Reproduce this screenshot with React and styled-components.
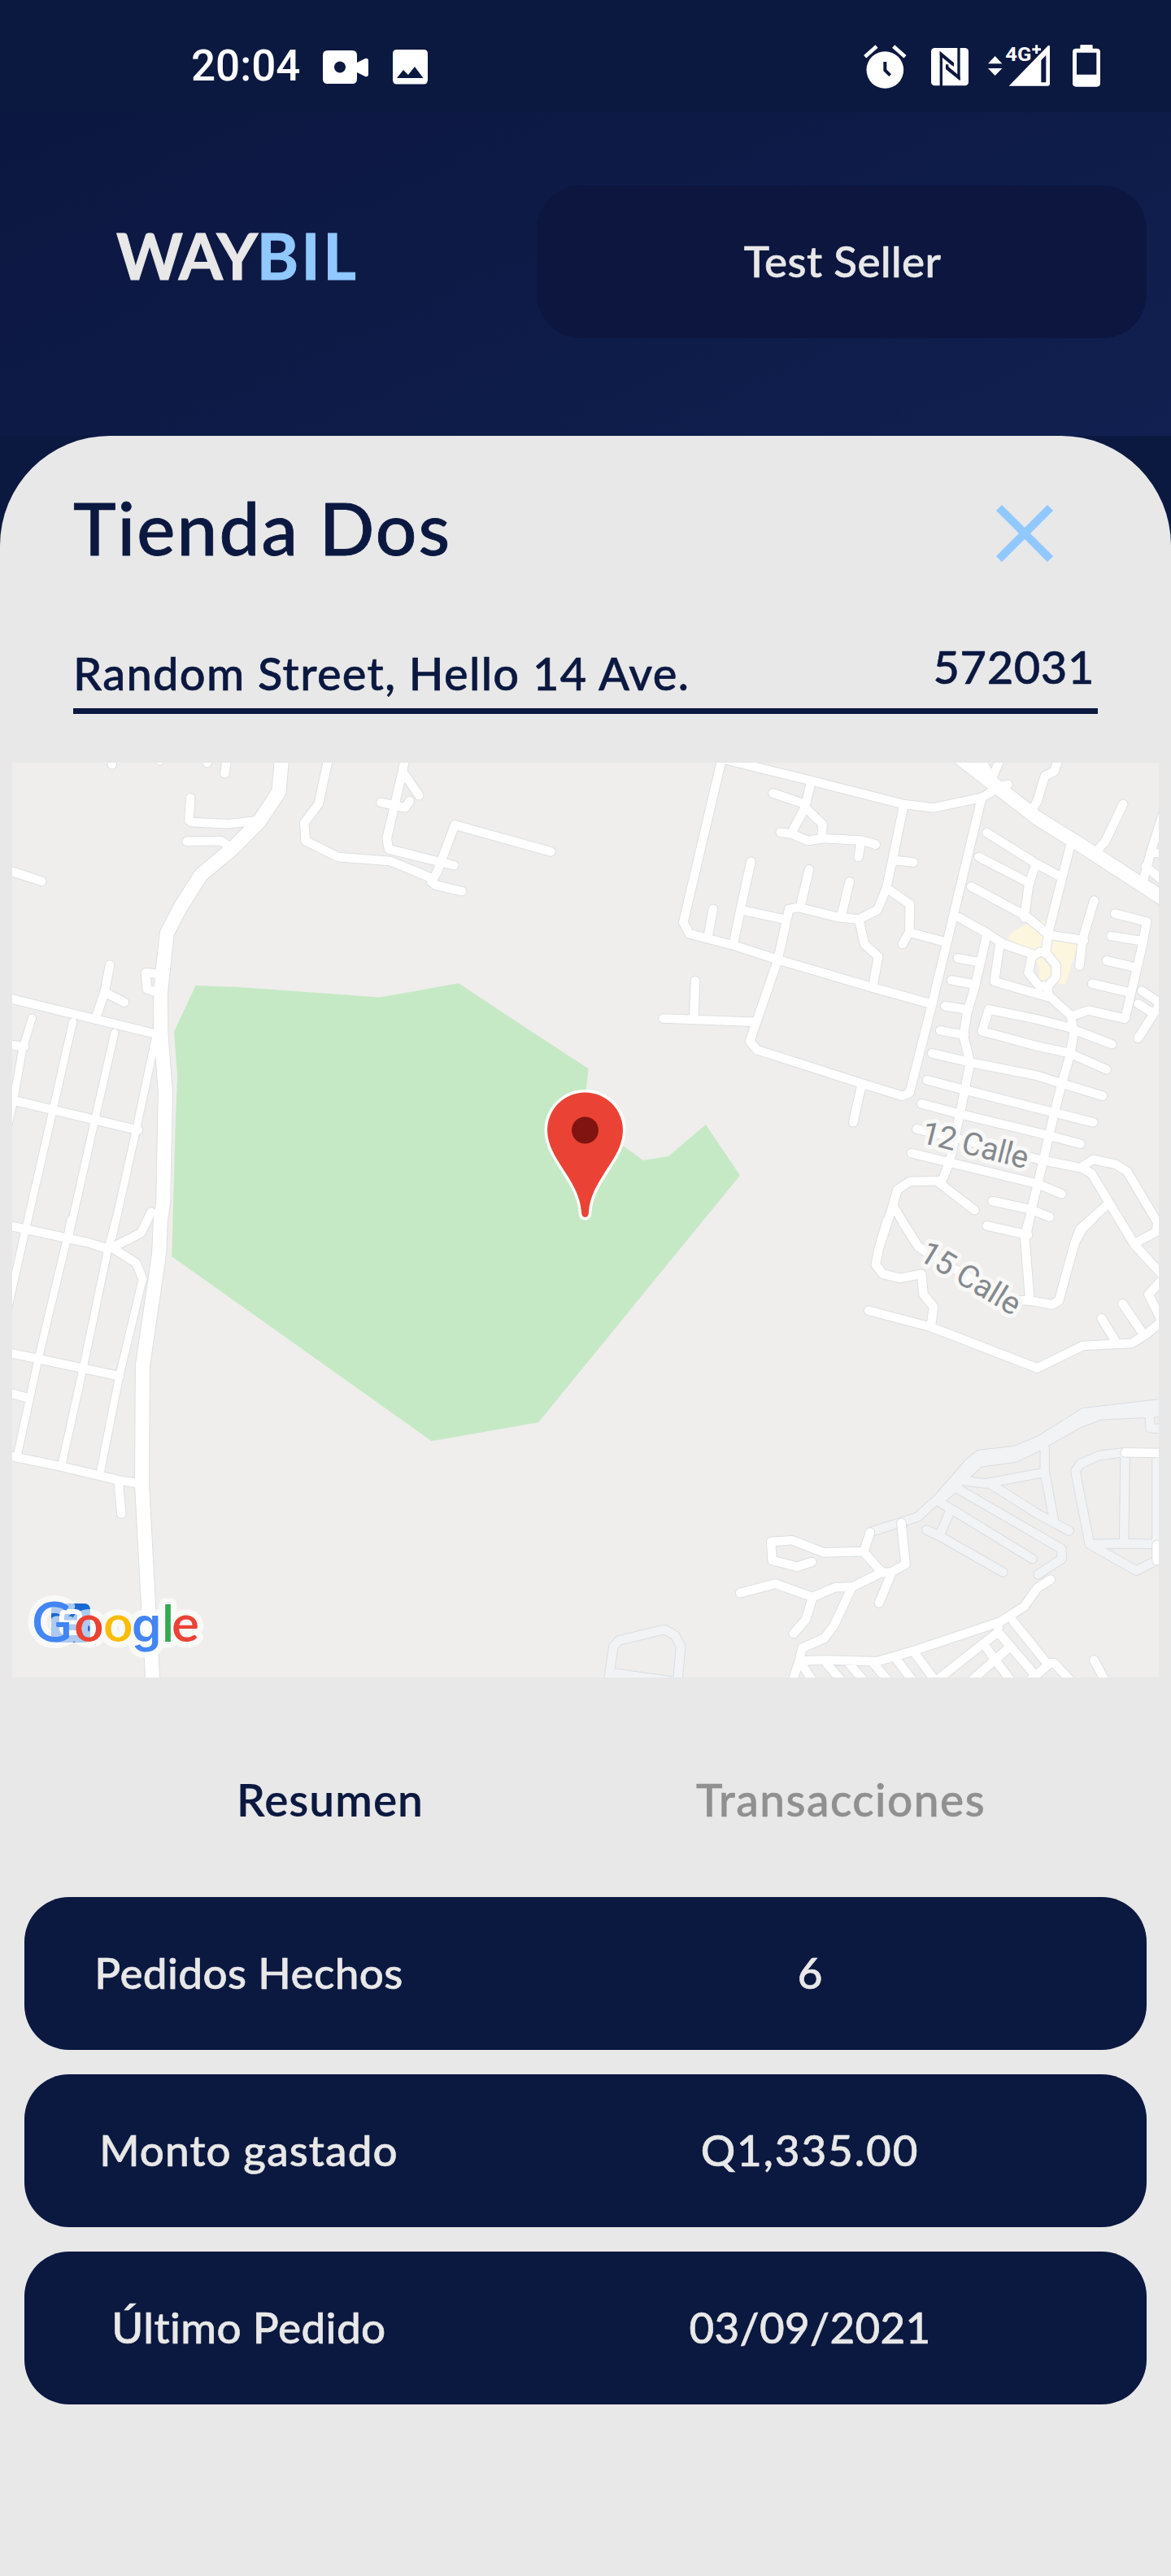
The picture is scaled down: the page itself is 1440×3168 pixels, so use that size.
import React from "react";
import styled, { createGlobalStyle } from "styled-components";

const navy = "#0b1840";
const light = "#e8e8e8";
const sky = "#90c8ff";

const GlobalStyle = createGlobalStyle`
  * { box-sizing: border-box; }
  body { margin: 0; background: ${navy}; font-family: Lato, "Open Sans", sans-serif; }
`;

const Screen = styled.main`
  width: 1440px;
  height: 3168px;
  display: flex;
  flex-direction: column;
  background: ${navy};
  overflow: hidden;
`;

const StatusBar = styled.div`
  height: 138px;
  flex: none;
  display: flex;
  align-items: flex-start;
  padding: 55px 87px 0 235px;
`;

const Clock = styled.span`
  width: 162px;
  font: 500 53px/52px Roboto, sans-serif;
  color: #fff;
`;

const StatusIcon = styled.svg`
  display: block;
  flex: none;
  width: ${(p) => p.$w}px;
  height: 54px;
  margin-left: ${(p) => p.$gap || 0};
  fill: #fff;
  overflow: visible;
`;

const Header = styled.header`
  height: 398px;
  flex: none;
  display: flex;
  justify-content: space-between;
  padding: 90px 30px 0 143px;
  background: linear-gradient(155deg, #0b1740 0%, #0e1b48 50%, #112050 100%);
`;

const Logo = styled.div`
  font-weight: 700;
  font-size: 78px;
  line-height: 173px;
  letter-spacing: -1.5px;
  color: ${light};
  -webkit-text-stroke: 1px currentColor;
  white-space: nowrap;
`;

const LogoAccent = styled.span`
  color: ${sky};
  letter-spacing: 3.5px;
`;

const SellerButton = styled.button`
  width: 750px;
  height: 188px;
  padding: 0 0 4px 2px;
  border: 0;
  border-radius: 55px;
  background: #0c163f;
  color: ${light};
  font: 500 53px/1 Lato, sans-serif;
  letter-spacing: 0.4px;
  -webkit-text-stroke: 0.6px currentColor;
`;

const Sheet = styled.section`
  flex: 1;
  background: ${light};
  border-radius: 135px 135px 0 0;
  color: ${navy};
`;

const TitleRow = styled.div`
  display: flex;
  justify-content: space-between;
  align-items: center;
  height: 170px;
  padding: 60px 145px 0 90px;
`;

const Title = styled.h1`
  margin: 0;
  padding-bottom: 4px;
  font-weight: 500;
  font-size: 89px;
  line-height: 106px;
  letter-spacing: 2.1px;
  -webkit-text-stroke: 0.8px currentColor;
`;

const CloseIcon = styled.svg`
  display: block;
  width: 70px;
  height: 70px;
  margin-top: 10px;
`;

const AddressRow = styled.div`
  display: flex;
  justify-content: space-between;
  align-items: flex-end;
  height: 172px;
  margin: 0 90px;
  border-bottom: 7px solid ${navy};
`;

const AddressText = styled.span`
  font-weight: 500;
  font-size: 56px;
  line-height: 64px;
  letter-spacing: ${(p) => p.$spacing}px;
  padding: 0 ${(p) => p.$right || 0}px ${(p) => p.$bottom}px 0;
  -webkit-text-stroke: 0.6px currentColor;
`;

const MapFrame = styled.svg`
  display: block;
  width: 1410px;
  height: 1125px;
  margin: 60px 15px 0;
  background: #efeeec;
`;

const Tabs = styled.nav`
  display: flex;
  height: 270px;
  padding: 110px 92px 0;
`;

const Tab = styled.div`
  flex: 1;
  height: 80px;
  text-align: center;
  font-weight: ${(p) => (p.$active ? 600 : 500)};
  font-size: 55px;
  line-height: 80px;
  letter-spacing: ${(p) => p.$spacing}px;
  color: ${(p) => (p.$active ? navy : "#909090")};
  -webkit-text-stroke: ${(p) => (p.$active ? 0.2 : 0.6)}px currentColor;
`;

const Summary = styled.div`
  display: flex;
  flex-direction: column;
  gap: 30px;
  padding: 0 30px;
`;

const SummaryRow = styled.div`
  display: grid;
  grid-template-columns: 40% 60%;
  align-items: center;
  justify-items: center;
  height: 188px;
  padding-bottom: 4px;
  border-radius: 55px;
  background: ${navy};
  color: ${light};
`;

const Cell = styled.span`
  font-weight: 500;
  font-size: 53px;
  letter-spacing: ${(p) => p.$spacing}px;
  -webkit-text-stroke: 0.6px currentColor;
`;

const tiles = {
  nw: "translate(0 920) scale(.45918 .38265)",
  ne: "translate(720 920) scale(.45918 .38265)",
  sw: "translate(0 1500) scale(.45918 .38265)",
  se: "translate(720 1500) scale(.45918 .38265)",
};

const avenues = [
  ["nw", "M757 0L747 140L695 235L625 320L538 408L484 510L447 595L434 740L430 790L431 920L443 1105L437 1460L430 1516"],
  ["sw", "M430 0L426 110L382 470L380 850L398 1250L409 1480"],
  ["ne", "M985 15L1092 115L1210 225L1330 315L1568 500"],
];

const streets = [
  ["nw", "M300 0V53M428 0V40M555 0V47M610 10L602 82M510 160L506 232L512 238L610 244L690 233M500 300L592 298L612 315"],
  ["nw", "M882 20L853 180L815 240L818 298L905 350L1045 363L1150 415L1165 440L1237 460M1087 20L1078 75L1036 290L1041 325L1216 377M1078 75L1122 152M1020 175L1085 192L1097 170M1475 333L1218 247L1170 400L1155 430"],
  ["nw", "M20 392L112 428M294 697L281 780L256 870M281 785L333 817M420 725L390 722L394 775L420 785M20 803L415 918M20 952L65 960"],
  ["nw", "M20 1128L370 1228"],
  ["sw", "M405 -25L378 42L300 90L365 140L382 190M20 18L240 75L290 95M20 427L105 448L320 503M20 555L72 572M20 758L160 792L320 838L385 850M318 850L325 945"],
  ["ne", "M368 20L262 560L278 597L400 635L515 680L770 770L928 823M367 35L605 105L850 180L932 192L1060 160L1095 135M605 105L588 190L553 270M502 145L588 180M588 190L635 245L633 290M522 271L550 275L596 298L635 290L742 297L777 310M738 300L731 350"],
  ["ne", "M852 185L822 360L806 450L782 520L732 550L682 545L570 512L545 518L515 680L440 943L460 970L740 1078L848 1118L868 1108L928 823L1060 165M822 360L878 367M806 450L869 502L867 592L849 630M867 592L962 623M732 550L747 630L784 670L769 770"],
  ["ne", "M443 365L415 520L396 630M415 520L530 550M342 517L328 605M599 390L575 510M707 430L684 545M294 748L290 873M208 869L450 880M740 1080L717 1203"],
  ["ne", "M1100 125L1132 117M1050 20L1080 80M1090 95L1115 20M1268 30L1255 75L1230 90L1210 170L1195 200M1440 180L1392 300L1370 330M1555 180L1515 330L1495 420M1515 335L1550 340M1500 380L1550 430"],
  ["ne", "M1298 315L1240 590L1232 660M1075 272L1205 370L1275 415M1053 350L1190 435M1205 375L1187 440L1175 545M1033 445L1180 540L1240 600L1335 618M1362 490L1330 620L1323 700M1001 545L1075 595L1120 630L1192 660"],
  ["ne", "M1217 655L1195 672L1186 722L1215 765L1238 765L1260 735L1260 698L1232 655ZM1238 765L1240 795L1300 860L1308 915L1297 990L1275 1080L1252 1190L1225 1330L1195 1480L1180 1568"],
  ["ne", "M1110 625L1095 750L1210 790L1240 800M1075 600L1042 770L1022 850L1012 925L1030 1010L1003 1175L975 1330L955 1390M997 675L1050 687M980 746L1035 758M963 829L1020 840M950 908L1015 922"],
  ["ne", "M1308 902L1210 872L1080 840L1062 910L1210 958L1295 980L1395 1033M1308 905L1410 952M928 981L1030 1010L1210 1053L1275 1078L1385 1118M915 1067L1020 1100L1250 1170L1360 1203M900 1143L1000 1175L1240 1245L1325 1272M887 1224L980 1250L1225 1325L1330 1350L1355 1367L1460 1575M873 1302L975 1332L1210 1400L1275 1433"],
  ["ne", "M1090 1456L1190 1482L1243 1507M1075 1535L1185 1565M955 1390L868 1393L835 1420L823 1470L795 1575M945 1395L1042 1485M823 1470L885 1590M1330 1345L1360 1322L1420 1338L1450 1360L1532 1525L1528 1555L1470 1592M1400 1465L1325 1545L1310 1590"],
  ["ne", "M1418 532L1503 558L1490 640L1445 870L1348 843L1300 862M1408 604L1490 620M1396 683L1475 705M1357 757L1455 785M1490 780L1545 825M1480 822L1515 848M1545 810L1480 932"],
  ["se", "M807 5L785 95L777 145L797 175L842 188L900 175L905 240L932 280L925 345M850 10L890 85L930 120L1020 180L1120 258L1190 260L1250 273L1268 260L1310 75L1330 30L1360 -5M1188 0L1176 50L1190 260"],
  ["se", "M758 292L925 345L1210 477L1332 405L1462 397L1500 370L1545 325M1382 317L1422 395M1438 270L1495 370M1430 0L1470 80L1550 185L1508 240L1545 330"],
  ["se", "M762 1005L745 1068L795 1135L818 1133L857 1108L846 975M745 1066L638 1070L553 1030L497 1035L500 1095L566 1115L606 1100M414 1200L509 1170L608 1213L668 1182L715 1180L795 1133M608 1215L590 1285L557 1330M818 1140L786 1232M712 1185L665 1305L640 1345L580 1377L572 1420L555 1480"],
  ["se", "M1245 1157L1210 1183L1175 1243L1110 1293L880 1385L780 1420L640 1415L575 1418M1145 1290L1235 1425L1255 1425L1310 1495M1105 1295L1105 1325L1205 1465M1105 1325L935 1485M1070 1370L1150 1500M1130 1380L1025 1490M1240 1430L1190 1480M580 1430L615 1495M645 1425L695 1495M705 1425L755 1495M770 1425L820 1495M832 1412L885 1495M880 1390L935 1480M1362 1415L1395 1490"],
  ["se", "M1445 748L1550 750M1530 1045L1530 1095"],
];

const lanes = [
  ["nw", "M86 867L60 970L35 1140L20 1220M195 880L142 1162L68 1550M307 915L254 1195L183 1575M418 925L365 1225L300 1575"],
  ["sw", "M68 32L20 290M190 0L178 68L103 445L45 765M310 0L290 90L222 480L165 790M382 190L320 500L268 815"],
];

const unpaved = [
  ["se", "M1550 590L1335 620L1215 710L1150 742L1055 755L1025 785L945 895L890 955L765 1003M1550 605L1525 620L1380 628L1320 655L1210 730L1150 765L1055 780L1020 820L985 865L945 905"],
  ["se", "M1510 625L1513 670L1550 672M1230 735V810L1255 970M1230 812L1070 848L1010 838M1085 850L1210 945L1295 1000M990 860L1275 1058V1090L1212 1140M945 905L1197 1090M975 940L950 1010M913 997L950 1018L1118 1133"],
  ["se", "M1442 748L1378 757L1325 785L1312 808L1350 1043L1452 1041L1530 1043M1350 1043L1475 1128L1530 1095M1445 760L1442 1040M1530 750V1043M62 1480L75 1370L90 1352L212 1317L240 1337L255 1372L247 1480M65 1455L240 1485"],
];

const Road = styled.path`
  fill: none;
  stroke: ${(p) => p.$color};
  stroke-width: ${(p) => p.$width}px;
  stroke-linecap: round;
  stroke-linejoin: round;
  vector-effect: non-scaling-stroke;
`;

const StreetName = styled.text`
  font: 400 39px Roboto, sans-serif;
  fill: #85898d;
  stroke: #f8f8f7;
  stroke-width: 10px;
  stroke-linejoin: round;
  paint-order: stroke;
`;

const Wordmark = styled.text`
  font: 600 ${(p) => p.$size}px ${(p) => p.$family}, sans-serif;
  stroke-linejoin: round;
`;

const network = [
  { roads: unpaved, width: 10.5, casing: "#dadde0", fill: "#f1f3f5" },
  { roads: lanes, width: 9, casing: "#dcdfe3", fill: "#fff" },
  { roads: streets, width: 10.5, casing: "#dcdfe3", fill: "#fff" },
  { roads: avenues, width: 17, casing: "#dcdfe3", fill: "#fff" },
];

const drawRoads = (group, color, extra) =>
  group.roads.map(([tile, d], i) => (
    <g key={i} transform={tiles[tile]}>
      <Road d={d} $color={color} $width={group.width + extra} />
    </g>
  ));

const googleLetters = [
  { char: "G", x: 39, color: "#4285f4", size: 68, family: "Lato" },
  { char: "o", x: 91, color: "#ea4335", size: 64, family: "Lato" },
  { char: "o", x: 127, color: "#fbbc05", size: 64, family: "Lato" },
  { char: "g", x: 162, color: "#4285f4", size: 58, family: "Inter" },
  { char: "l", x: 199, color: "#34a853", size: 62, family: "Lato" },
  { char: "e", x: 211, color: "#ea4335", size: 64, family: "Lato" },
];

function StoreMap() {
  return (
    <MapFrame viewBox="15 938 1410 1125">
      <g transform={tiles.nw}>
        <path
          fill="#c5e9c5"
          d="M524 763L640 768L1018 801L1228 756L1473 950L1576 1030L1570 1095L1668 1278L1723 1325L1790 1312L1890 1210L1982 1373L1442 2167L1156 2227L460 1634L463 1500L470 1200L475 1055L466 912Z"
        />
      </g>
      <g transform={tiles.ne} fill="#fdf6df">
        <path d="M1215 557H1232L1230 590L1222 650L1195 655L1130 612L1145 590L1175 570Z" />
        <path d="M1245 618L1318 632L1286 757H1255L1240 655Z" />
        <path d="M1203 680L1217 668L1245 705V735L1228 747L1215 745V700Z" />
      </g>
      {drawRoads(network[0], network[0].casing, 2)}
      {drawRoads(network[0], network[0].fill, 0)}
      {network.slice(1).map((g) => drawRoads(g, g.casing, 2))}
      {network.slice(1).map((g) => drawRoads(g, g.fill, 0))}

      <StreetName transform="translate(1131 1405) rotate(14)" textLength="134">12 Calle</StreetName>
      <StreetName transform="translate(1128 1548) rotate(31)" textLength="137">15 Calle</StreetName>

      <path
        d="M673 1390A46.5 46.5 0 0 1 766 1390C766 1425 727 1450 724 1490Q724 1497 719.5 1497Q715 1497 715 1490C712 1450 673 1425 673 1390Z"
        fill="#ea4335"
        stroke="#fff"
        strokeWidth="7"
        paintOrder="stroke"
      />
      <circle cx="719.5" cy="1390" r="16.5" fill="#811411" />

      <rect x="63" y="1972" width="48" height="48" rx="7" fill="#1967d2" />
      <rect x="76" y="1982" width="22" height="26" rx="5" fill="none" stroke="#fff" strokeWidth="6" />
      <path d="M76 1995H98" stroke="#fff" strokeWidth="5" />
      <g opacity=".65">
        {googleLetters.map((l, i) => (
          <Wordmark key={i} x={l.x} y="2019" $size={l.size} $family={l.family} fill="#fff" stroke="#fff" strokeWidth="15">
            {l.char}
          </Wordmark>
        ))}
      </g>
      {googleLetters.map((l, i) => (
        <Wordmark key={i} x={l.x} y="2019" $size={l.size} $family={l.family} fill={l.color}>
          {l.char}
        </Wordmark>
      ))}
    </MapFrame>
  );
}

function StatusIcons() {
  return (
    <>
      <StatusIcon viewBox="0 0 56 54" $w={56}>
        <path
          fillRule="evenodd"
          d="M6 7H36Q42 7 42 13V22L52 17Q56 16 56 20V36Q56 40 52 39L42 34V42Q42 48 36 48H6Q0 48 0 42V13Q0 7 6 7ZM21 20.500A7 7 0 1 0 21.010 20.500Z"
        />
      </StatusIcon>
      <StatusIcon viewBox="0 0 43 54" $w={43} $gap="30px">
        <path fillRule="evenodd" d="M5 6H38Q43 6 43 11V43Q43 48.500 38 48.500H5Q0 48.500 0 43V11Q0 6 5 6ZM5 41H37.500L27 27L19 37L13 31Z" />
      </StatusIcon>
      <StatusIcon viewBox="32 45 158 162" $w={52.7} $gap="auto">
        <circle cx="111" cy="138" r="68.500" />
        <path d="M37 89L80 51M142 51L185 89" stroke="#fff" strokeWidth="14" />
        <path d="M111 108V139L130 158" fill="none" stroke={navy} strokeWidth="12" />
      </StatusIcon>
      <StatusIcon viewBox="282 45 138 162" $w={46} $gap="30.7px">
        <rect x="282" y="57" width="138" height="139" rx="13" />
        <path d="M319 198V82L362 118" fill="none" stroke={navy} strokeWidth="10" />
        <path d="M384 55V166L341 131V118" fill="none" stroke={navy} strokeWidth="10" />
        <path d="M314 68L366 112V126L314 83ZM336 118L389 163V178L336 135Z" fill={navy} />
      </StatusIcon>
      <StatusIcon viewBox="492 45 228 162" $w={76} $gap="24px">
        <path d="M492 115L518 87L544 115ZM492 132H544L518 159Z" />
        <path fillRule="evenodd" d="M569 197L714 48Q720 46 720 52V190Q720 197 713 197ZM688 102V184H706V84Z" />
        <text x="556" y="104" fontFamily="Roboto, sans-serif" fontWeight="700" fontSize="74" textLength="96" lengthAdjust="spacingAndGlyphs" stroke={navy} strokeWidth="5" paintOrder="stroke">4G</text>
        <path d="M655 62H687M671 46V78" stroke="#fff" strokeWidth="9" />
      </StatusIcon>
      <StatusIcon viewBox="804 45 102 162" $w={34} $gap="28px">
        <path fillRule="evenodd" d="M836 45H874Q878 45 878 49V59H893Q906 59 906 72V187Q906 200 893 200H817Q804 200 804 187V72Q804 59 817 59H832V49Q832 45 836 45ZM819 74V155H892V74Z" />
      </StatusIcon>
    </>
  );
}

const rows = [
  { label: "Pedidos Hechos", labelSpacing: 0.4, value: "6", valueSpacing: 0 },
  { label: "Monto gastado", labelSpacing: 1.1, value: "Q1,335.00", valueSpacing: 1.9 },
  { label: "Último Pedido", labelSpacing: 0.4, value: "03/09/2021", valueSpacing: 0.3 },
];

export default function App() {
  return (
    <Screen>
      <GlobalStyle />
      <StatusBar>
        <Clock>20:04</Clock>
        <StatusIcons />
      </StatusBar>
      <Header>
        <Logo>WAY<LogoAccent>BIL</LogoAccent></Logo>
        <SellerButton>Test Seller</SellerButton>
      </Header>
      <Sheet>
        <TitleRow>
          <Title>Tienda Dos</Title>
          <CloseIcon viewBox="0 0 70 70">
            <path d="M3.500 3.500L66.500 66.500M66.500 3.500L3.500 66.500" stroke={sky} strokeWidth="10" />
          </CloseIcon>
        </TitleRow>
        <AddressRow>
          <AddressText $bottom={11} $spacing={1.3}>Random Street, Hello 14 Ave.</AddressText>
          <AddressText $bottom={19} $spacing={0.6} $right={4}>572031</AddressText>
        </AddressRow>
        <StoreMap />
        <Tabs>
          <Tab $active $spacing={1}>Resumen</Tab>
          <Tab $spacing={1.5}>Transacciones</Tab>
        </Tabs>
        <Summary>
          {rows.map((row) => (
            <SummaryRow key={row.label}>
              <Cell $spacing={row.labelSpacing}>{row.label}</Cell>
              <Cell $spacing={row.valueSpacing}>{row.value}</Cell>
            </SummaryRow>
          ))}
        </Summary>
      </Sheet>
    </Screen>
  );
}
